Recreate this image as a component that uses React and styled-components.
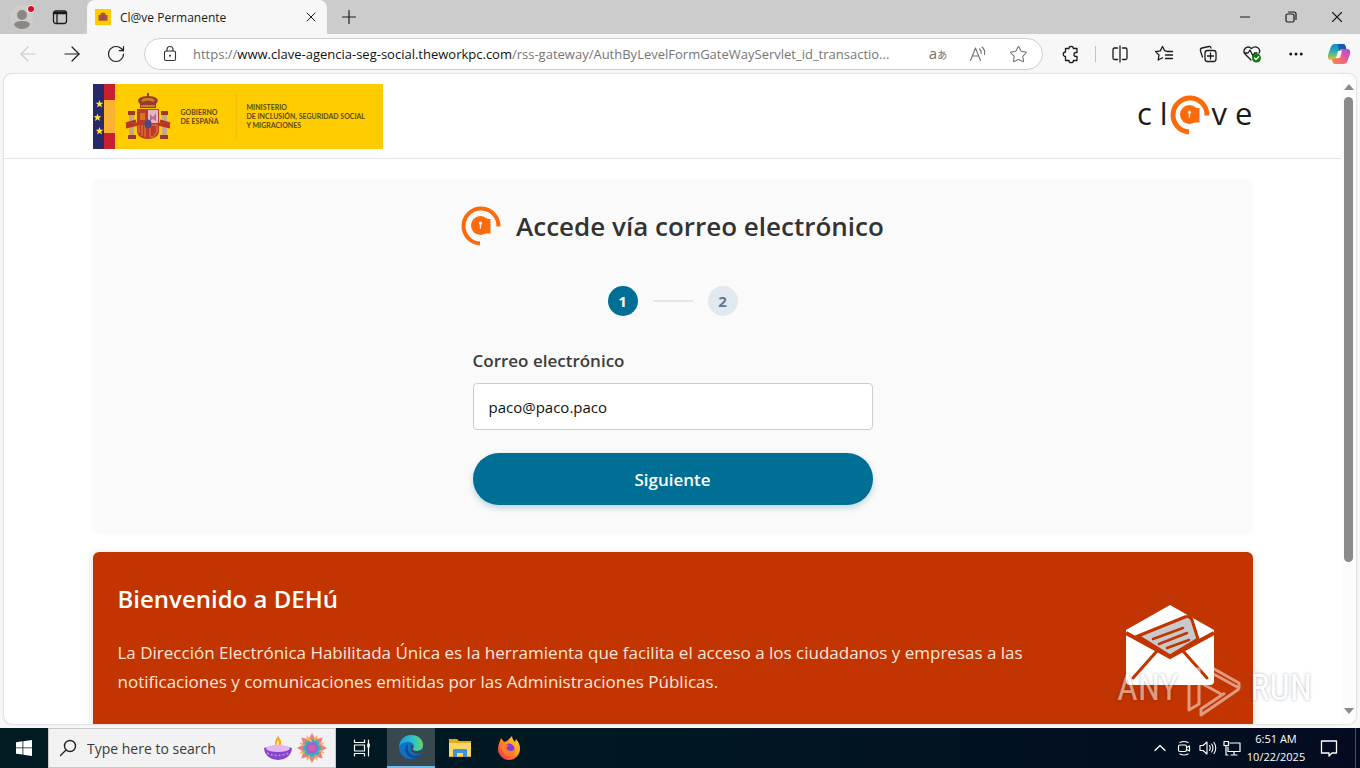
import styled, { createGlobalStyle, css } from "styled-components";
import {
    ArrowLeft, ArrowRight, RotateCw, X, Plus, Minus, Star, Ellipsis, ChevronUp
} from "lucide-react";

const GlobalStyle = createGlobalStyle`
    * {
        box-sizing: border-box;
    }
    body {
        margin: 0;
        font-family: "Open Sans", "Noto Sans", "Noto Sans CJK JP", sans-serif;
        color: #333;
        background-color: #f7f7f7;
    }
    button, input {
        font-family: inherit;
    }
    h1, h2, p {
        margin: 0;
    }
`

const Desktop = styled.div`
    position: relative;
    display: flex;
    flex-direction: column;
    height: 100vh;
    overflow: hidden;
`

/* browser chrome */

const TabStrip = styled.div`
    display: flex;
    align-items: stretch;
    height: 34px;
    flex-shrink: 0;
    background-color: #ccc;
`

const PlainButton = styled.button`
    display: flex;
    align-items: center;
    justify-content: center;
    flex-shrink: 0;
    width: ${(props) => props.$width || 44}px;
    padding: 0;
    border: none;
    background: none;
    color: ${(props) => props.$color || '#1b1b1b'};
`

const TabTools = styled.div`
    display: flex;
    width: 87px;
    flex-shrink: 0;
    padding-right: 5px;
    border-bottom-right-radius: 8px;
    background-color: #c8c8c8;
`

const Tab = styled.div`
    display: flex;
    align-items: center;
    gap: 9px;
    width: 240px;
    padding: 0 8px;
    border-radius: 8px 8px 0 0;
    background-color: #f7f7f7;
    font-size: 12px;
    color: #1b1b1b;
`

const TabTitle = styled.span`
    flex: 1;
    white-space: nowrap;
`

const WindowControls = styled.div`
    display: flex;
    margin-left: auto;
`

const Toolbar = styled.div`
    display: flex;
    align-items: center;
    height: 40px;
    flex-shrink: 0;
    padding-left: 6px;
`

const AddressBar = styled.div`
    display: flex;
    align-items: center;
    flex: 1;
    min-width: 0;
    height: 32px;
    margin: 0 6px;
    padding: 0 4px 0 16px;
    border: 1px solid #cfcfcf;
    border-radius: 16px;
    background-color: #fff;
`

const Url = styled.a`
    flex: 1;
    margin-left: 14px;
    overflow: hidden;
    white-space: nowrap;
    font-size: 13px;
    color: #767676;
    text-decoration: none;

    b {
        font-weight: 400;
        color: #111;
    }
`

const TranslateGlyph = styled.span`
    font-size: 15px;
    line-height: 18px;

    small {
        font-size: 10px;
    }
`

const Separator = styled.span`
    width: 1px;
    height: 16px;
    margin: 0 2px;
    background-color: #c4c4c4;
`

/* web page */

const Viewport = styled.div`
    display: flex;
    flex: 1;
    min-height: 0;
    margin: 0 4px 4px;
    border-radius: 8px;
    overflow: hidden;
    background-color: #fff;
    box-shadow: 0 0 2px rgba(0, 0, 0, 0.3);
`

const Page = styled.div`
    flex: 1;
    min-width: 0;
    overflow: hidden;
`

const Container = styled.div`
    max-width: 1200px;
    margin: 0 auto;
    padding: 0 20px;
`

const SiteHeader = styled.header`
    border-bottom: 1px solid #e3e5e8;
`

const HeaderRow = styled(Container)`
    display: flex;
    align-items: flex-start;
    justify-content: space-between;
    padding-top: 10px;
    padding-bottom: 9px;
`

const GovLogo = styled.div`
    display: flex;
    align-items: center;
    gap: 9px;
    height: 65px;
    width: 290px;
    background-color: #fc0;
    font-family: Lato, sans-serif;
    font-size: 7px;
    line-height: 9px;
    font-weight: 700;
    color: #5a4a18;
    white-space: nowrap;
`

const GovName = styled.div`
    width: 46px;
`

const Ministry = styled.div`
    padding: 10px 0 10px 10px;
    border-left: 1px solid #f0c010;
`

const Wordmark = styled.div`
    display: flex;
    align-items: center;
    gap: 2px;
    height: 40px;
    margin-top: 11px;
    font-size: 31px;
    line-height: 36px;
    color: #1c1a19;
`

const Pair = styled.span`
    display: flex;
    gap: 8px;
    height: 40px;
`

const Card = styled.main`
    display: flex;
    flex-direction: column;
    align-items: center;
    gap: 40px;
    margin: 20px 0;
    padding: 27px 20px;
    border-radius: 8px;
    background-color: #fafafa;
    box-shadow: 0 2px 4px rgba(0, 0, 0, 0.03);
`

const CardTitle = styled.div`
    display: flex;
    align-items: center;
    gap: 15px;

    h1 {
        font-size: 26px;
        line-height: 40px;
        font-weight: 600;
        color: #333;
    }
`

const Steps = styled.div`
    display: flex;
    align-items: center;
    gap: 15px;
`

const Step = styled.span`
    width: 30px;
    height: 30px;
    border-radius: 50%;
    font-size: 15px;
    line-height: 30px;
    font-weight: 700;
    text-align: center;
    color: #64748b;
    background-color: #e2e8f0;

    ${(props) =>
        props.$active && css`
            color: #fff;
            background-color: #006f95;
        `
    }
`

const StepLine = styled.span`
    width: 40px;
    height: 2px;
    background-color: #e4e6e9;
`

const Form = styled.form`
    display: flex;
    flex-direction: column;
    width: 100%;
    max-width: 400px;
    margin-top: -8px;
`

const Label = styled.label`
    margin-bottom: 9px;
    font-size: 17px;
    line-height: 26px;
    font-weight: 600;
    color: #3c3c3c;
`

const EmailInput = styled.input`
    height: 47px;
    padding: 0 15px;
    border: 1px solid #ccc;
    border-radius: 4px;
    background-color: #fff;
    font-size: 15px;
    color: #111;
`

const NextButton = styled.button`
    height: 52px;
    margin-top: 23px;
    border: none;
    border-radius: 26px;
    background-color: #006f95;
    box-shadow: 0 3px 6px rgba(0, 111, 149, 0.25);
    font-size: 17px;
    font-weight: 600;
    color: #fff;
`

const Banner = styled.section`
    display: flex;
    align-items: center;
    justify-content: space-between;
    padding: 25px 38px 17px 25px;
    border-radius: 6px;
    background-color: #c23400;
    box-shadow: 0 2px 8px rgba(0, 0, 0, 0.15);

    h2 {
        font-size: 24px;
        line-height: 44px;
        font-weight: 600;
        color: #fff;
    }

    p {
        max-width: 930px;
        margin: 17px 0;
        font-size: 17px;
        line-height: 29px;
        color: #ffe6dc;
    }
`

const Scrollbar = styled.div`
    display: flex;
    flex-direction: column;
    align-items: center;
    width: 15px;
    padding: 10px 0;
    background-color: #fcfcfc;
`

const ScrollTrack = styled.div`
    flex: 1;
    width: 9px;
    margin: 7px 0;
`

const ScrollThumb = styled.div`
    height: 77%;
    border-radius: 5px;
    background-color: #8b8b8b;
`

const Watermark = styled.div`
    position: absolute;
    right: 48px;
    bottom: 50px;
    display: flex;
    align-items: center;
    gap: 8px;
    font-family: "Roboto Condensed", "Liberation Sans Narrow", Roboto, sans-serif;
    font-size: 36px;
    line-height: 60px;
    font-weight: 400;
    color: #fff;
    opacity: 0.5;
    text-shadow: 0 0 3px rgba(0, 0, 0, 0.6);
`

/* taskbar */

const Taskbar = styled.footer`
    display: flex;
    height: 40px;
    flex-shrink: 0;
    background: linear-gradient(90deg, #001c22, #001722 50%, #040b20);
    color: #fff;
`

const SearchBox = styled.label`
    display: flex;
    align-items: center;
    gap: 5px;
    width: 288px;
    padding: 0 8px 0 10px;
    border: 1px solid #c8c8c8;
    background-color: #f2f2f2;
    color: #222;

    input {
        flex: 1;
        min-width: 0;
        padding: 0 0 0 5px;
        border: none;
        background: none;
        font-size: 14px;
    }

    input::placeholder {
        color: #3a3a3a;
        opacity: 1;
    }
`

const Apps = styled.div`
    display: flex;
    gap: 1px;
    padding-left: 2px;
`

const AppButton = styled(PlainButton)`
    width: 48px;
    ${(props) =>
        props.$open && css`
            background-color: #37494f;
            border-bottom: 2px solid #76b9ed;
        `
    }
`

const Tray = styled.div`
    display: flex;
    margin-left: auto;
    margin-right: 4px;
    padding-right: 5px;
    border-right: 1px solid #4a4f60;
`

const Clock = styled.time`
    width: 64px;
    padding-top: 2px;
    font-size: 11px;
    line-height: 18px;
    text-align: center;
`

const Icon = ({ size = 20, box = 20, width = 1.2, children }) => (
    <svg width={size} height={size} viewBox={`0 0 ${box} ${box}`} fill="none" stroke="currentColor"
        strokeWidth={width} strokeLinecap="round" strokeLinejoin="round" aria-hidden="true">
        {children}
    </svg>
)

const ClaveMark = ({ stroke = 5 }) => (
    <svg width="40" height="40" viewBox="0 0 40 40" aria-hidden="true">
        <path d={`M${39.5 - stroke / 2} 20.5A${19.5 - stroke / 2} ${19.5 - stroke / 2} 0 1 0 19 ${39.5 - stroke / 2}`}
            fill="none" stroke="#fb6a0b" strokeWidth={stroke} />
        <circle cx="19.5" cy="19.5" r="9.5" fill="#fb6a0b" />
        <path d="M20 13h9.500v14.500h-5l-6-2z" fill="#fb6a0b" />
        <path d="M17.800 17.500a1.700 1.700 0 1 1 2.400 1.300l-.2 4h-1.200l-.1-4z" fill="#ffe9d6" />
    </svg>
)

const Flag = () => (
    <svg width="22" height="65" viewBox="0 0 22 65" aria-hidden="true">
        <rect width="11" height="65" fill="#272a68" />
        <rect x="11" width="11" height="65" fill="#c8202f" />
        <rect x="11" y="16" width="11" height="33" fill="#f9b233" />
        {[[6.5, 20], [4.5, 33.5], [6.5, 47]].map(([x, y]) => (
            <path key={y} transform={`translate(${x} ${y})`} fill="#ffe63a"
                d="M0-4 1-1.200H4L1.600.600 2.500 3.500 0 1.700-2.500 3.500-1.600.600-4-1.200H-1z" />
        ))}
    </svg>
)

const Shield = () => (
    <svg width="48" height="50" viewBox="1 0 48 48" aria-hidden="true">
        <g fill="#9b3a2a">
            <path d="M17 11c-5-5 1-8 8-8s13 3 8 8v4H17z" />
            <path d="M24 0h2v4h-2z" />
            <path d="M5 18h7v4H5zM5 42h8v4H5zM38 18h7v4h-7zM37 42h8v4h-8z" />
        </g>
        <path d="M19 9c-2-3 2-4 6-4s8 1 6 4c-4-2-8-2-12 0z" fill="#c9822a" />
        <path d="M18 13h14" stroke="#d9982a" strokeWidth="1.500" />
        <path d="M6 22h5v20H6zM39 22h5v20h-5z" fill="#c3a98a" />
        <path d="M3 31l10-3M3 34l12-3M47 31l-10-3M47 34l-12-3" stroke="#b5352b" strokeWidth="3" />
        <path d="M14 16h22v22c0 5-5 8-11 8s-11-3-11-8z" fill="#c1372d" />
        <path d="M25 17h10v13H25z" fill="#e0b9c4" />
        <path d="M27 28v-7l3 3 3-4v8l-3-2z" fill="#b56c92" />
        <path d="M17 20h5v7h-5z" fill="#cf7a1e" />
        <path d="M16 32v8m3-8v11m3-11v12" stroke="#e08a2c" strokeWidth="1" />
        <path d="M27 32h7v7l-4 5h-3z" fill="none" stroke="#e08a2c" strokeWidth="1" />
        <ellipse cx="25" cy="31" rx="3.500" ry="4.500" fill="#4b4a86" />
    </svg>
)

const Envelope = () => (
    <svg width="90" height="82" viewBox="0 0 90 82" aria-hidden="true">
        <path d="M45 1 89 26v51q0 4-4 4H5q-4 0-4-4V26z" fill="#fff" />
        <path d="M1 29 45 53 89 29" stroke="#c23400" strokeWidth="4" fill="none" />
        <path d="M13 32 60 13q5-2 7 3l6 19-28 17z" fill="#c8c9ca" stroke="#c23400" strokeWidth="3" />
        <path d="M28 35 58 24M34 40 62 29M42 44 64 36" stroke="#c23400" strokeWidth="2.500" fill="none" strokeLinecap="round" />
        <path d="M32 47 8 74M58 47 82 74" stroke="#c23400" strokeWidth="3" fill="none" strokeLinecap="round" />
    </svg>
)

const Copilot = () => (
    <svg width="24" height="24" viewBox="0 0 24 24" aria-label="Copilot">
        <defs>
            <linearGradient id="cpA" x1="0" y1="0" x2="0" y2="1">
                <stop offset="0" stopColor="#1785d8" />
                <stop offset="0.5" stopColor="#2cb5a6" />
                <stop offset="1" stopColor="#f1c232" />
            </linearGradient>
            <linearGradient id="cpB" x1="1" y1="0" x2="0" y2="1">
                <stop offset="0" stopColor="#a54be0" />
                <stop offset="0.5" stopColor="#ee5d8d" />
                <stop offset="1" stopColor="#f78c3c" />
            </linearGradient>
        </defs>
        <path d="M8 2h8q2 0 2.500 2l.8 3H15q-2 0-2.500 2l-2 7q-.5 2-2.500 2H4q-4 0-3-5L3.500 6Q4.500 2 8 2z" fill="url(#cpA)" />
        <path d="M11 2h5q2 0 2.500 2l.8 3H15q-2 0-3 2z" fill="#1557b8" />
        <path d="M16 22H8q-2 0-2.500-2L5 17h4q2 0 2.500-2l2-6q.5-2 2.500-2h4q4 0 3 5l-2.500 7q-1 3-4.500 3z" fill="url(#cpB)" />
        <path d="M11 9h4l-2 7H9z" fill="#fbf3f5" />
    </svg>
)

const Diya = () => (
    <svg width="28" height="26" viewBox="0 0 28 24" aria-hidden="true">
        <path d="M14 0q5 6 2 10h-4Q9 7 14 0z" fill="#f9a52b" />
        <path d="M14 4q2 4 0 6-3-1 0-6z" fill="#fff0a8" />
        <path d="M0 12q14-5 28 0-1 11-14 12Q1 23 0 12z" fill="#8445c9" />
        <ellipse cx="14" cy="12.500" rx="12" ry="3.500" fill="#e5b6f2" />
        <path d="M3 17q11 5 22 0" stroke="#c391f0" strokeWidth="1.500" fill="none" strokeDasharray="2 2" />
    </svg>
)

const Rangoli = () => (
    <svg width="30" height="30" viewBox="-15 -15 30 30" aria-hidden="true">
        {[0, 45, 90, 135, 180, 225, 270, 315].map((angle) => (
            <g key={angle} transform={`rotate(${angle})`}>
                <path d="M0-15 4-8H-4z" fill="#ec7f86" />
                <path d="M0-14 3-6H-3z" fill="#f5b552" transform="rotate(22)" />
                <circle cy="-6" r="3" fill="#35b0bd" />
            </g>
        ))}
        <circle r="6" fill="#9c67cd" />
        <circle r="3" fill="#e05aa7" />
    </svg>
)

const EdgeLogo = () => (
    <svg width="24" height="24" viewBox="0 0 24 24" aria-hidden="true">
        <defs>
            <linearGradient id="edgeTop" x1="0" x2="1">
                <stop offset="0" stopColor="#199ae0" />
                <stop offset="0.6" stopColor="#2fc3c7" />
                <stop offset="1" stopColor="#63d957" />
            </linearGradient>
        </defs>
        <circle cx="12" cy="12" r="12" fill="#1371c4" />
        <path d="M0 12C1 4 6 0 12 0c8 0 12 5 12 10 0 4-3 6-6 6-4 0-5-2-4-3 2-2 0-6-4-6C5 7 1 9 0 12z" fill="url(#edgeTop)" />
        <path d="M9 9c-5 3-3 12 4 14 4 1 7-1 9-4-8 4-15-1-13-10z" fill="#0c4d95" />
        <path d="M14 13c-1 1 0 3 4 3 2 0 4-.7 5.300-2-.2 2-.8 3.500-1.500 4.500-5 2-11-1-10-6.500 0-1 1-2 1.800-2 1 1 1.200 2 .4 3z" fill="#37494f" />
    </svg>
)

const Explorer = () => (
    <svg width="22" height="20" viewBox="0 0 22 20" aria-hidden="true">
        <path d="M0 1h8l2 2h12v16H0z" fill="#e5a91c" />
        <path d="M0 5h22v13H0z" fill="#fcd667" />
        <path d="M4 19v-7q0-1 1-1h12q1 0 1 1v7h-4v-4H8v4z" fill="#3d93d6" />
    </svg>
)

const Firefox = () => (
    <svg width="24" height="24" viewBox="0 0 24 24" aria-hidden="true">
        <defs>
            <linearGradient id="fox" x1="1" y1="0" x2="0" y2="1">
                <stop offset="0" stopColor="#ffe03a" />
                <stop offset="0.5" stopColor="#ff8a1f" />
                <stop offset="1" stopColor="#f0205f" />
            </linearGradient>
        </defs>
        <path d="M3 5l1-3 3 4 3-1 5-5c0 3 2 4 3 6l1-3c3 3 4 7 4 10 0 6-5 11-11 11S1 19 1 13c0-3 1-6 2-8z" fill="url(#fox)" />
        <circle cx="12" cy="13" r="5.500" fill="#7a3fd8" />
        <path d="M4 10c3-3 6-2 8 0-3 0-3 3-1 4 2 2 5 1 6-1 1 5-4 7-7 6-4-1-6-5-6-9z" fill="#ff7a2b" />
    </svg>
)

function BrowserTabs() {
    return (
        <TabStrip>
            <TabTools>
                <PlainButton aria-label="Profile">
                    <svg width="24" height="24" viewBox="0 0 24 24">
                        <circle cx="12" cy="12" r="12" fill="#cfccca" />
                        <circle cx="12" cy="10" r="5" fill="#8b8785" />
                        <path d="M4 20q0-4 8-4t8 4q-3 4-8 4t-8-4z" fill="#8b8785" />
                        <circle cx="21" cy="4" r="4" fill="#e8e8e8" />
                        <circle cx="21" cy="4" r="3" fill="#d3102a" />
                    </svg>
                </PlainButton>
                <PlainButton $width={32} aria-label="Tab actions">
                    <Icon size={16} box={16} width={1.300}>
                        <rect x="1.500" y="2" width="13" height="12.500" rx="2.500" />
                        <path d="M2 4h12" strokeWidth="2.500" />
                        <path d="M5 5v9" />
                    </Icon>
                </PlainButton>
            </TabTools>
            <Tab>
                <svg width="16" height="16" viewBox="0 0 50 50" aria-hidden="true">
                    <rect width="50" height="50" fill="#fc0" />
                    <path d="M17 15q8-8 16 0v4h6v18H11V19h6z" fill="#b0502e" />
                    <path d="M22 20h8v12h-8z" fill="#8d4c73" />
                </svg>
                <TabTitle>Cl@ve Permanente</TabTitle>
                <PlainButton $width={16} aria-label="Close tab"><X size={16} strokeWidth={1.500} /></PlainButton>
            </Tab>
            <PlainButton aria-label="New tab"><Plus size={22} strokeWidth={1.300} /></PlainButton>
            <WindowControls>
                <PlainButton $width={46} aria-label="Minimize"><Minus size={16} strokeWidth={1.500} /></PlainButton>
                <PlainButton $width={46} aria-label="Restore">
                    <Icon size={12} box={12}>
                        <rect x="1" y="3" width="8" height="8" rx="1.500" />
                        <path d="M3.500 1H9q2 0 2 2v5.500" />
                    </Icon>
                </PlainButton>
                <PlainButton $width={46} aria-label="Close"><X size={18} strokeWidth={1.500} /></PlainButton>
            </WindowControls>
        </TabStrip>
    )
}

function BrowserToolbar() {
    return (
        <Toolbar>
            <PlainButton $color="#c9c9c9" aria-label="Back"><ArrowLeft size={24} strokeWidth={1.200} /></PlainButton>
            <PlainButton aria-label="Forward"><ArrowRight size={24} strokeWidth={1.200} /></PlainButton>
            <PlainButton aria-label="Refresh"><RotateCw size={20} strokeWidth={1.400} /></PlainButton>
            <AddressBar>
                <Icon size={18} box={18} width={1.100}>
                    <rect x="3.500" y="6" width="11" height="9.500" rx="1.500" />
                    <path d="M6 6V4.500a3 3 0 0 1 6 0V6" />
                    <circle cx="9" cy="10.700" r="0.500" />
                </Icon>
                <Url href="#">
                    https://<b>www.clave-agencia-seg-social.theworkpc.com</b>/rss-gateway/AuthByLevelFormGateWayServlet_id_transactio...
                </Url>
                <PlainButton $width={40} $color="#707070" aria-label="Translate">
                    <TranslateGlyph>a<small>あ</small></TranslateGlyph>
                </PlainButton>
                <PlainButton $width={40} $color="#707070" aria-label="Read aloud">
                    <Icon size={18} box={18} width={1.100}>
                        <path d="M1.500 15.500 6.500 3l5 12.500M3.300 11h6.400M10.500 4q2 2 1.700 4.500M13 2q3.500 3 2.500 7.500" />
                    </Icon>
                </PlainButton>
                <PlainButton $width={40} $color="#707070" aria-label="Favorite"><Star size={19} strokeWidth={1.300} /></PlainButton>
            </AddressBar>
            <PlainButton aria-label="Extensions">
                <Icon width={1.300}>
                    <path d="M4.500 4.500H8a2.200 2.200 0 0 1 4.400 0H16V8.500h-1a2 2 0 0 0 0 4h1v4h-3.600a2.200 2.200 0 0 1-4.400 0H4.500V12.500a2.200 2.200 0 0 1 0-4.500z" />
                </Icon>
            </PlainButton>
            <Separator />
            <PlainButton aria-label="Split screen">
                <Icon width={1.300}>
                    <path d="M7.500 4H4.500Q3 4 3 5.500v8.500q0 1.500 1.500 1.500h3M12.500 4h3Q17 4 17 5.500v8.500q0 1.500-1.500 1.500h-3M10 2v16" />
                </Icon>
            </PlainButton>
            <PlainButton aria-label="Favorites">
                <Icon width={1.300}>
                    <path d="M12 7 10.700 6.700 8.500 2.500 6.300 6.900 1.500 7.600 5 11 4.200 16 8.500 13.700M13 7.500h5.500M11.500 11h7M11.500 14.500h7" />
                </Icon>
            </PlainButton>
            <PlainButton aria-label="Collections">
                <Icon width={1.300}>
                    <rect x="7" y="6.500" width="11" height="11" rx="2.500" />
                    <path d="M12.500 9v6M9.500 12h6M4.500 13 2.500 7Q2 4.500 4 4l7-1.500q1.500-.3 2 1.500" />
                </Icon>
            </PlainButton>
            <PlainButton aria-label="Browser essentials">
                <Icon width={1.300}>
                    <path d="M9 16 3.500 10.500C-.5 6 5 .5 9.500 4.500 14 .5 19.500 5 17 9M2 9h4l2-3 3 6 1.500-3H15" />
                    <circle cx="14.500" cy="14" r="4.500" fill="#107c10" stroke="none" />
                    <path d="M12.500 14 14 15.500 16.700 12.700" stroke="#fff" />
                </Icon>
            </PlainButton>
            <PlainButton aria-label="Settings"><Ellipsis size={18} /></PlainButton>
            <PlainButton $width={42} aria-label="Copilot"><Copilot /></PlainButton>
        </Toolbar>
    )
}

function WindowsTaskbar() {
    return (
        <Taskbar>
            <PlainButton $width={48} $color="#fff" aria-label="Start">
                <svg width="16" height="16" viewBox="0 0 16 16" fill="currentColor">
                    <path d="M0 2.200 6.500 1.300v6.200H0zM7.300 1.200 16 0v7.500H7.300zM0 8.300h6.500v6.300L0 13.700zM7.300 8.300H16V16l-8.700-1.200z" />
                </svg>
            </PlainButton>
            <SearchBox>
                <Icon size={18} box={18} width={1.400}>
                    <circle cx="11" cy="7" r="5.500" />
                    <path d="M7 11 1.500 16.500" />
                </Icon>
                <input type="text" placeholder="Type here to search" aria-label="Type here to search" />
                <Diya />
                <Rangoli />
            </SearchBox>
            <Apps>
                <AppButton $color="#fff" aria-label="Task view">
                    <Icon size={18} box={18} width={1.200}>
                        <path d="M1.500 2.500V1M1.500 3.500h10V1M1.500 6h10v6h-10zM1.500 17v-2.500h10V17M15.500 1v16" />
                        <path d="M15.500 5.500v2" strokeWidth="2.500" />
                    </Icon>
                </AppButton>
                <AppButton $open aria-label="Microsoft Edge"><EdgeLogo /></AppButton>
                <AppButton aria-label="File Explorer"><Explorer /></AppButton>
                <AppButton aria-label="Firefox"><Firefox /></AppButton>
            </Apps>
            <Tray>
                <PlainButton $width={24} $color="#fff" aria-label="Show hidden icons"><ChevronUp size={20} strokeWidth={1.500} /></PlainButton>
                <PlainButton $width={24} $color="#fff" aria-label="Meet now">
                    <Icon size={16} box={16}>
                        <rect x="2.500" y="5" width="8" height="6.500" rx="1.500" />
                        <path d="M10.500 7.500 13.500 6v5l-3-1.500M4 2.500q4-2 8 0M4 14q4 2 8 0" />
                    </Icon>
                </PlainButton>
                <PlainButton $width={24} $color="#fff" aria-label="Volume">
                    <Icon size={18} box={18} width={1.100}>
                        <path d="M1 6.500h3L8 3v12L4 11.500H1zM10.500 6.500q1.500 2.500 0 5M12.700 5q2.500 4 0 8M15 3.500q3.500 5.500 0 11" />
                    </Icon>
                </PlainButton>
                <PlainButton $width={24} $color="#fff" aria-label="Network">
                    <Icon size={18} box={18} width={1.200}>
                        <path d="M7 4h10v8.500H5V8M8 16h6M11 12.500V16M1 2.500h4.500v4H1zM3 6.500V16h2" />
                    </Icon>
                </PlainButton>
                <Clock>6:51 AM<br />10/22/2025</Clock>
                <PlainButton $width={42} $color="#fff" aria-label="Notifications">
                    <Icon size={18} box={18} width={1.300}>
                        <path d="M1.500 2h15v12H12l-3 3v-3H1.500z" />
                    </Icon>
                </PlainButton>
            </Tray>
        </Taskbar>
    )
}

export default function App() {
    return (
        <Desktop>
            <GlobalStyle />
            <BrowserTabs />
            <BrowserToolbar />

            <Viewport>
                <Page>
                    <SiteHeader>
                        <HeaderRow>
                            <GovLogo>
                                <Flag />
                                <Shield />
                                <GovName>GOBIERNO<br />DE ESPAÑA</GovName>
                                <Ministry>MINISTERIO<br />DE INCLUSIÓN, SEGURIDAD SOCIAL<br />Y MIGRACIONES</Ministry>
                            </GovLogo>
                            <Wordmark>
                                <Pair><span>c</span><span>l</span></Pair>
                                <ClaveMark />
                                <Pair><span>v</span><span>e</span></Pair>
                            </Wordmark>
                        </HeaderRow>
                    </SiteHeader>

                    <Container>
                        <Card>
                            <CardTitle>
                                <ClaveMark stroke={4} />
                                <h1>Accede vía correo electrónico</h1>
                            </CardTitle>
                            <Steps>
                                <Step $active>1</Step>
                                <StepLine />
                                <Step>2</Step>
                            </Steps>
                            <Form>
                                <Label htmlFor="email">Correo electrónico</Label>
                                <EmailInput id="email" type="text" defaultValue="paco@paco.paco" />
                                <NextButton type="button">Siguiente</NextButton>
                            </Form>
                        </Card>

                        <Banner>
                            <div>
                                <h2>Bienvenido a DEHú</h2>
                                <p>
                                    La Dirección Electrónica Habilitada Única es la herramienta que facilita el acceso a los ciudadanos y empresas a las notificaciones y comunicaciones emitidas por las Administraciones Públicas.
                                </p>
                            </div>
                            <Envelope />
                        </Banner>
                    </Container>
                </Page>
                <Scrollbar aria-hidden="true">
                    <svg width="10" height="6" viewBox="0 0 10 6"><path d="M0 6 5 0l5 6z" fill="#8b8b8b" /></svg>
                    <ScrollTrack><ScrollThumb /></ScrollTrack>
                    <svg width="10" height="6" viewBox="0 0 10 6"><path d="M0 0 5 6l5-6z" fill="#8b8b8b" /></svg>
                </Scrollbar>
            </Viewport>

            <WindowsTaskbar />

            <Watermark>
                <span>ANY</span>
                <svg width="56" height="60" viewBox="0 0 56 60" fill="none" stroke="currentColor" strokeWidth="3" strokeLinejoin="round">
                    <path d="M3 11v41l10-6V24l22 12M3 11h10v8M14 8v-5l39 22v5L22 13M53 31 15 57v-6l24-16" />
                </svg>
                <span>RUN</span>
            </Watermark>
        </Desktop>
    )
}
